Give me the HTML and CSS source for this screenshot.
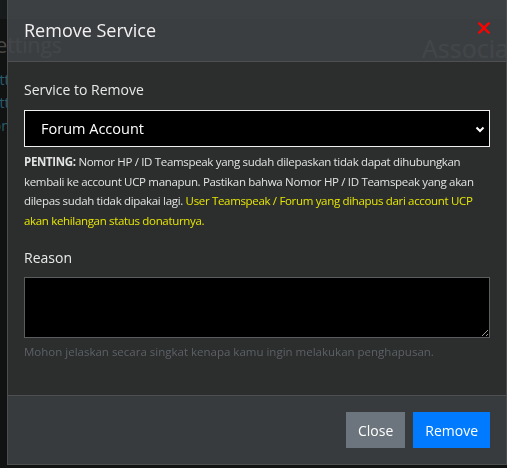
FILE: index.html
```html
<!DOCTYPE html>
<html lang="en">
  <head>
    <meta charset="UTF-8" />
    <meta name="viewport" content="width=device-width, initial-scale=1.0" />
    <title>Remove Service</title>
    <link rel="stylesheet" href="styles.css">
  </head>
  <body>
    <!-- page behind the modal -->
    <div class="page">
      <div class="topbar"></div>
      <div class="page-head">
        <h2 class="page-title">Settings</h2>
        <h2 class="page-title right">Associations</h2>
      </div>
      <ul class="side-menu">
        <li>Setting</li>
        <li>Setting</li>
        <li>Connect</li>
      </ul>
    </div>

    <div class="backdrop"></div>

    <div class="modal">
      <div class="modal-header">
        <h5 class="modal-title">Remove Service</h5>
        <button class="btn-x" type="button" aria-label="Close">
          <svg width="12" height="12" viewBox="0 0 12 12">
            <path d="M1.5 1.5 L10.5 10.5 M10.5 1.5 L1.5 10.5" stroke="#ff0000" stroke-width="2.4" stroke-linecap="square" fill="none" />
          </svg>
        </button>
      </div>

      <div class="modal-body">
        <label class="field-label" for="service">Service to Remove</label>
        <div class="select-wrap">
          <select id="service" class="form-select">
            <option>Forum Account</option>
            <option>Teamspeak</option>
            <option>Nomor HP</option>
          </select>
          <svg class="chevron" width="10" height="7" viewBox="0 0 10 7">
            <path d="M1.5 1.5 L5 5 L8.5 1.5" stroke="#ffffff" stroke-width="2" fill="none" />
          </svg>
        </div>
        <p class="note">
          <strong>PENTING:</strong> Nomor HP / ID Teamspeak yang sudah dilepaskan tidak dapat dihubungkan kembali ke account UCP manapun. Pastikan bahwa Nomor HP / ID Teamspeak yang akan dilepas sudah tidak dipakai lagi. <span class="warn">User Teamspeak / Forum yang dihapus dari account UCP akan kehilangan status donaturnya.</span>
        </p>

        <label class="field-label reason" for="reason">Reason</label>
        <textarea id="reason" class="form-text"></textarea>
        <small class="help">Mohon jelaskan secara singkat kenapa kamu ingin melakukan penghapusan.</small>
      </div>

      <div class="modal-footer">
        <button class="btn btn-grey" type="button">Close</button>
        <button class="btn btn-blue" type="button">Remove</button>
      </div>
    </div>
  </body>
</html>
```

FILE: styles.css
```css
* {
  margin: 0;
  padding: 0;
  box-sizing: border-box;
  font-family: "Open Sans", sans-serif;
}

body {
  background: #1b1c1c;
  color: #e6e6e6;
  overflow: hidden;
}

/* page behind */
.page {
  margin-left: -16px;
}

.topbar {
  height: 19px;
  background: #262a2c;
}

.page-head {
  display: flex;
  padding-top: 12px;
  white-space: nowrap;
}

.page-title {
  flex: none;
  width: 438px;
  font-weight: normal;
  font-size: 21px;
  line-height: 28px;
  color: #6f6e6a;
}

.page-title.right {
  width: auto;
  font-size: 25px;
  line-height: 34px;
}

.side-menu {
  list-style: none;
  padding-top: 6px;
  color: #3f8fa6;
  font-size: 14px;
  line-height: 17px;
}

.side-menu li {
  margin-bottom: 6px;
}

.backdrop {
  position: fixed;
  inset: 0;
  background: rgba(0, 0, 0, 0.35);
}

/* modal */
.modal {
  position: fixed;
  top: 0;
  left: 7px;
  width: 500px;
  border: 1px solid #4b4d4e;
  border-top: none;
}

.modal-header {
  display: flex;
  justify-content: space-between;
  align-items: flex-start;
  height: 62px;
  padding: 16px 16px 0 16px;
  background: rgba(66, 70, 73, 0.86);
  border-bottom: 1px solid #4d4f51;
}

.modal-title {
  font-size: 18px;
  font-weight: normal;
  line-height: 28px;
  color: #f2f2f2;
}

.btn-x {
  background: none;
  border: none;
  margin-top: 4px;
  margin-right: 0;
  cursor: pointer;
}

.modal-body {
  padding: 16px 16px 34px 16px;
  background: #2c2e2e;
}

.field-label {
  display: block;
  font-size: 14px;
  line-height: 24px;
  margin-bottom: 8px;
  color: #e8e8e8;
}

.field-label.reason {
  margin-top: 16px;
  margin-bottom: 7px;
}

.select-wrap {
  position: relative;
}

.form-select {
  appearance: none;
  width: 100%;
  height: 37px;
  padding-left: 16px;
  background: #000;
  color: #fff;
  border: 1px solid #f0f0f0;
  font-size: 14.5px;
  outline: none;
}

.chevron {
  position: absolute;
  right: 5px;
  top: 16px;
}

.note {
  font-size: 11.5px;
  line-height: 19.5px;
  letter-spacing: -0.33px;
  margin-top: 5px;
  color: #e2e2e2;
}

.warn {
  color: #e6e600;
}

.form-text {
  display: block;
  width: 100%;
  height: 61px;
  background: #000;
  border: 1px solid #5a5d60;
  color: #fff;
  resize: vertical;
  outline: none;
}

.help {
  display: block;
  font-size: 11.5px;
  line-height: 18px;
  margin-top: 5px;
  color: #5d6166;
}

.modal-footer {
  display: flex;
  justify-content: flex-end;
  gap: 8px;
  padding: 16px;
  background: #383b3e;
  border-top: 1px solid #4d4f51;
}

.btn {
  height: 36px;
  padding: 0 12px;
  border: none;
  color: #fff;
  font-size: 14px;
  cursor: pointer;
}

.btn-grey {
  background: #6c757d;
}

.btn-blue {
  background: #007bff;
}
```
